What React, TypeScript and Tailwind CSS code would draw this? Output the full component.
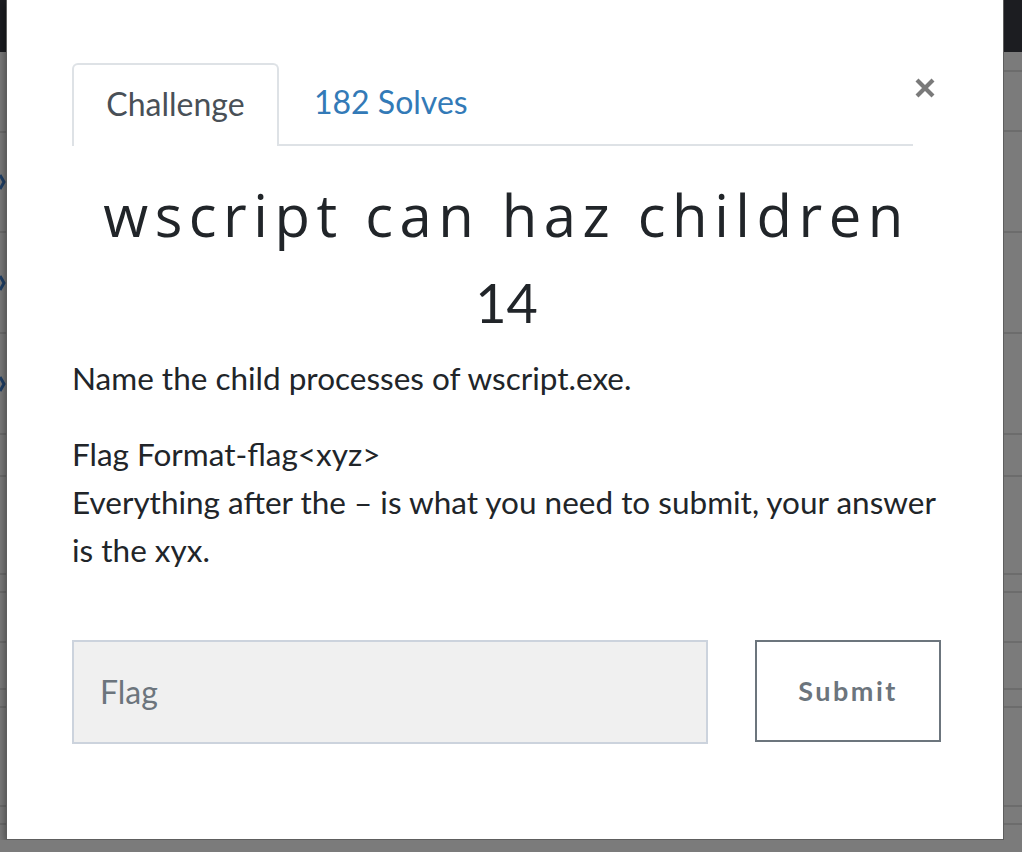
import React from "react";

function Strip({ lines, width, marks }: { lines: number[]; width: string; marks?: Record<number, boolean> }) {
  const segs: { h: number }[] = [];
  let prev = 52;
  for (const y of lines) {
    segs.push({ h: y - prev });
    prev = y;
  }
  return (
    <div className={`flex flex-col ${width} shrink-0 overflow-hidden`}>
      <div className="h-[52px] bg-[#1c1d21] shrink-0" />
      {segs.map((s, i) => (
        <div
          key={i}
          className="border-b-2 border-[#6c6c6c] bg-[#7b7b7b] shrink-0 flex items-center"
          style={{ height: s.h }}
        >
          {marks && marks[i] ? (
            <svg width="6" height="20" viewBox="0 0 6 20">
              <path d="M0 3 L4 10 L0 17" stroke="#1f3f66" strokeWidth="3" fill="none" />
            </svg>
          ) : null}
        </div>
      ))}
      <div className="flex-1 bg-[#7b7b7b]" />
    </div>
  );
}

export default function App() {
  return (
    <div
      className="w-[1022px] h-[852px] overflow-hidden bg-[#7b7b7b] flex flex-col"
      style={{ fontFamily: "Lato, 'Noto Sans', sans-serif" }}
    >
      <div className="flex h-[840px] shrink-0">
        <Strip
          width="w-[6px]"
          lines={[133, 233, 334, 435, 477, 575, 593, 643, 690, 708, 807, 825, 900]}
          marks={{ 1: true, 2: true, 3: true }}
        />
        <div className="w-[998px] shrink-0 bg-white border-x border-b border-[#5e5e5e] shadow-[0_3px_9px_rgba(0,0,0,0.5)] pl-[65px] pr-[62px] pt-[63px] text-[#212529]">
          <div className="flex items-start">
            <div className="flex-1 flex items-end border-b-2 border-[#dee2e6] h-[83px]">
              <div className="w-[207px] h-[83px] -mb-[2px] pb-[4px] border-2 border-b-0 border-[#dee2e6] rounded-t-[6px] bg-white flex items-center justify-center text-[32px] text-[#495057]">
                Challenge
              </div>
              <div className="ml-[35px] h-[83px] pb-[2px] flex items-center text-[32px] text-[#337ab7]">182 Solves</div>
            </div>
            <div className="w-[28px] flex justify-center mt-[14px] pr-[4px]">
              <svg width="22" height="22" viewBox="0 0 22 22">
                <path d="M3 3 L19 19 M19 3 L3 19" stroke="#7a7a7a" strokeWidth="4.2" strokeLinecap="butt" />
              </svg>
            </div>
          </div>
          <div className="text-center">
            <h3
              className="mt-[36px] text-[58px] leading-[66px] tracking-[6.5px] font-normal text-[#212529]"
              style={{ fontFamily: "'Open Sans', Lato, sans-serif" }}
            >
              wscript can haz children
            </h3>
            <div className="mt-[25px] text-[54px] leading-[60px] text-[#212529]">14</div>
          </div>
          <div className="mt-[21px] w-[876px] text-[31.5px] leading-[48px] text-[#212529]">
            <p className="mb-[28px]">Name the child processes of wscript.exe.</p>
            <p>
              Flag Format-flag&lt;xyz&gt;
              <br />
              Everything after the – is what you need to submit, your answer is the xyx.
            </p>
          </div>
          <div className="mt-[66px] flex items-start">
            <div className="w-[636px] h-[104px] bg-[#f0f0f0] border-2 border-[#ccd3dd] flex items-center pl-[26px] text-[32px] text-[#6c757d]">
              Flag
            </div>
            <div className="ml-[47px] w-[186px] h-[102px] border-2 border-[#6c757d] flex items-center justify-center text-[27px] font-bold tracking-[2.5px] text-[#6c757d]">
              Submit
            </div>
          </div>
        </div>
        <Strip width="flex-1" lines={[72, 132, 233, 334, 435, 477, 575, 593, 643, 690, 708, 807, 825, 900]} />
      </div>
      <div className="flex-1 bg-[#7b7b7b]" />
    </div>
  );
}
